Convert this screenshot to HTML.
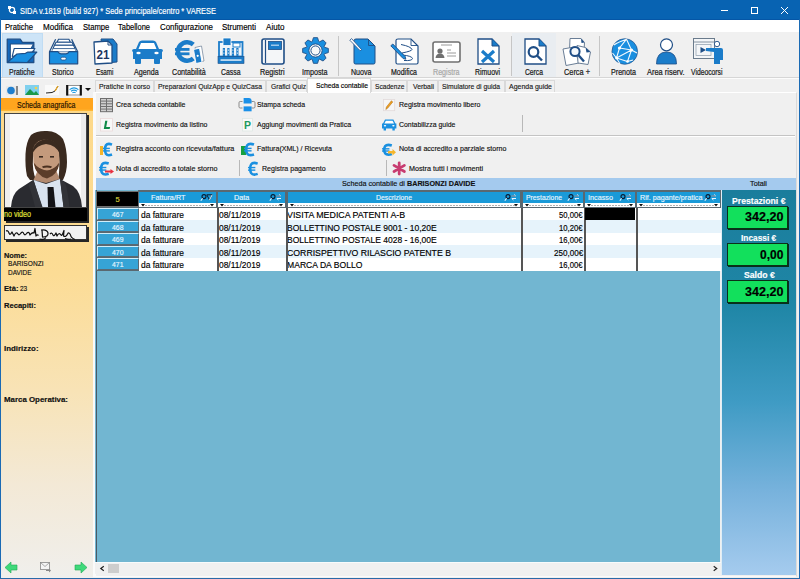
<!DOCTYPE html>
<html><head><meta charset="utf-8">
<style>
html,body{margin:0;padding:0;}
body{width:800px;height:579px;overflow:hidden;position:relative;background:#f0f0f0;font-family:"Liberation Sans",sans-serif;}
.t{position:absolute;white-space:nowrap;-webkit-text-stroke:0.16px currentColor;}
.b{position:absolute;box-sizing:border-box;}
svg.b{overflow:visible;}
</style></head><body>

<div class="b" style="left:0px;top:0px;width:800px;height:20px;background:#0863b2;"></div>
<div class="b" style="left:0px;top:19px;width:800px;height:1px;background:#0556a6;"></div>
<svg class="b" style="left:8px;top:6px" width="8" height="8" viewBox="0 0 8 8"><rect x="0" y="0" width="3" height="3" fill="#fff"/><rect x="5" y="5" width="3" height="3" fill="#fff"/><circle cx="4" cy="4" r="2.6" fill="none" stroke="#fff" stroke-width="1.3"/></svg>
<div class="t" style="left:20.00px;top:5.75px;font-size:8.4px;line-height:10.08px;color:#fff;transform:scaleX(0.8895);transform-origin:0 0;">SIDA v.1819 (build 927) * Sede principale/centro * VARESE</div>
<div class="b" style="left:721px;top:10px;width:7px;height:1px;background:#fff;"></div>
<div class="b" style="left:751px;top:7px;width:7px;height:7px;border:1px solid #fff;"></div>
<svg class="b" style="left:781px;top:7px" width="7" height="7" viewBox="0 0 7 7"><path d="M0 0L7 7M7 0L0 7" stroke="#fff" stroke-width="1"/></svg>
<div class="b" style="left:0px;top:19px;width:1px;height:560px;background:#1a6ab4;"></div>
<div class="b" style="left:799px;top:19px;width:1px;height:560px;background:#1a6ab4;"></div>
<div class="b" style="left:0px;top:577.6px;width:800px;height:1.4px;background:#2a6aa8;"></div>
<div class="b" style="left:1px;top:20px;width:798px;height:12px;background:#fff;"></div>
<div class="t" style="left:5.30px;top:22.64px;font-size:8.3px;line-height:9.96px;color:#000;transform:scaleX(0.9232);transform-origin:0 0;">Pratiche</div>
<div class="t" style="left:42.80px;top:22.64px;font-size:8.3px;line-height:9.96px;color:#000;transform:scaleX(0.9707);transform-origin:0 0;">Modifica</div>
<div class="t" style="left:82.50px;top:22.64px;font-size:8.3px;line-height:9.96px;color:#000;transform:scaleX(0.9198);transform-origin:0 0;">Stampe</div>
<div class="t" style="left:118.20px;top:22.64px;font-size:8.3px;line-height:9.96px;color:#000;transform:scaleX(0.9006);transform-origin:0 0;">Tabellone</div>
<div class="t" style="left:160.00px;top:22.64px;font-size:8.3px;line-height:9.96px;color:#000;transform:scaleX(0.9496);transform-origin:0 0;">Configurazione</div>
<div class="t" style="left:222.00px;top:22.64px;font-size:8.3px;line-height:9.96px;color:#000;transform:scaleX(0.9573);transform-origin:0 0;">Strumenti</div>
<div class="t" style="left:265.60px;top:22.64px;font-size:8.3px;line-height:9.96px;color:#000;transform:scaleX(0.9724);transform-origin:0 0;">Aiuto</div>
<div class="b" style="left:2px;top:33px;width:40.5px;height:44.5px;background:#cde4f7;border:1px solid #c0dcf3;"></div>
<div class="b" style="left:512px;top:33px;width:44px;height:44px;background:#e9edf1;"></div>
<div class="b" style="left:337.5px;top:36px;width:1px;height:40px;background:#c6c6c6;"></div>
<div class="b" style="left:510.7px;top:36px;width:1px;height:40px;background:#c6c6c6;"></div>
<div class="b" style="left:599px;top:36px;width:1px;height:40px;background:#c6c6c6;"></div>
<div class="b" style="left:1px;top:77px;width:798px;height:1px;background:#d6d6d6;"></div>
<div class="b" style="left:1px;top:78px;width:798px;height:1px;background:#fcfcfc;"></div>
<div class="t" style="left:8.70px;top:66.56px;font-size:8.6px;line-height:10.32px;color:#1a1a1a;transform:scaleX(0.8087);transform-origin:0 0;-webkit-text-stroke:0.22px currentColor;">Pratiche</div>
<div class="t" style="left:52.20px;top:66.56px;font-size:8.6px;line-height:10.32px;color:#1a1a1a;transform:scaleX(0.8075);transform-origin:0 0;-webkit-text-stroke:0.22px currentColor;">Storico</div>
<div class="t" style="left:96.00px;top:66.56px;font-size:8.6px;line-height:10.32px;color:#1a1a1a;transform:scaleX(0.7325);transform-origin:0 0;-webkit-text-stroke:0.22px currentColor;">Esami</div>
<div class="t" style="left:134.30px;top:66.56px;font-size:8.6px;line-height:10.32px;color:#1a1a1a;transform:scaleX(0.8333);transform-origin:0 0;-webkit-text-stroke:0.22px currentColor;">Agenda</div>
<div class="t" style="left:171.70px;top:66.56px;font-size:8.6px;line-height:10.32px;color:#1a1a1a;transform:scaleX(0.8299);transform-origin:0 0;-webkit-text-stroke:0.22px currentColor;">Contabilità</div>
<div class="t" style="left:220.80px;top:66.56px;font-size:8.6px;line-height:10.32px;color:#1a1a1a;transform:scaleX(0.8005);transform-origin:0 0;-webkit-text-stroke:0.22px currentColor;">Cassa</div>
<div class="t" style="left:260.00px;top:66.56px;font-size:8.6px;line-height:10.32px;color:#1a1a1a;transform:scaleX(0.8408);transform-origin:0 0;-webkit-text-stroke:0.22px currentColor;">Registri</div>
<div class="t" style="left:301.70px;top:66.56px;font-size:8.6px;line-height:10.32px;color:#1a1a1a;transform:scaleX(0.8339);transform-origin:0 0;-webkit-text-stroke:0.22px currentColor;">Imposta</div>
<div class="t" style="left:351.00px;top:66.56px;font-size:8.6px;line-height:10.32px;color:#1a1a1a;transform:scaleX(0.8252);transform-origin:0 0;-webkit-text-stroke:0.22px currentColor;">Nuova</div>
<div class="t" style="left:390.60px;top:66.56px;font-size:8.6px;line-height:10.32px;color:#1a1a1a;transform:scaleX(0.8125);transform-origin:0 0;-webkit-text-stroke:0.22px currentColor;">Modifica</div>
<div class="t" style="left:432.80px;top:66.56px;font-size:8.6px;line-height:10.32px;color:#a8a8a8;transform:scaleX(0.8281);transform-origin:0 0;-webkit-text-stroke:0.22px currentColor;">Registra</div>
<div class="t" style="left:475.00px;top:66.56px;font-size:8.6px;line-height:10.32px;color:#1a1a1a;transform:scaleX(0.8052);transform-origin:0 0;-webkit-text-stroke:0.22px currentColor;">Rimuovi</div>
<div class="t" style="left:525.30px;top:66.56px;font-size:8.6px;line-height:10.32px;color:#1a1a1a;transform:scaleX(0.7847);transform-origin:0 0;-webkit-text-stroke:0.22px currentColor;">Cerca</div>
<div class="t" style="left:563.50px;top:66.56px;font-size:8.6px;line-height:10.32px;color:#1a1a1a;transform:scaleX(0.8568);transform-origin:0 0;-webkit-text-stroke:0.22px currentColor;">Cerca +</div>
<div class="t" style="left:611.00px;top:66.56px;font-size:8.6px;line-height:10.32px;color:#1a1a1a;transform:scaleX(0.8303);transform-origin:0 0;-webkit-text-stroke:0.22px currentColor;">Prenota</div>
<div class="t" style="left:647.00px;top:66.56px;font-size:8.6px;line-height:10.32px;color:#1a1a1a;transform:scaleX(0.8661);transform-origin:0 0;-webkit-text-stroke:0.22px currentColor;">Area riserv.</div>
<div class="t" style="left:691.40px;top:66.56px;font-size:8.6px;line-height:10.32px;color:#1a1a1a;transform:scaleX(0.7856);transform-origin:0 0;-webkit-text-stroke:0.22px currentColor;">Videocorsi</div>
<svg class="b" style="left:5px;top:37px" width="34" height="28" viewBox="0 0 34 28">
<path d="M2.25 2.2 L15.2 2.2 L17.4 5.3 L28.8 5.3 L28.8 25.5 L2.25 25.5 Z" fill="#1268bd" stroke="#1f4e86" stroke-width="1.3" stroke-linejoin="round"/>
<path d="M5.3 7 L28.6 7 L25.6 12.2 L5.3 23.5 Z" fill="#fff" stroke="#1f4e86" stroke-width="1.1" stroke-linejoin="round"/>
<path d="M9.2 11.5 L30 11.5 L27.2 15 L7.2 19.5 Z" fill="#fff" stroke="#1f4e86" stroke-width="1.1" stroke-linejoin="round"/>
<path d="M2.6 25.2 L11.9 17 L20.5 16.3 L22.5 15.2 L31.8 15.2 L22.4 25.5 Z" fill="#1a8fe0" stroke="#1f4e86" stroke-width="1.2" stroke-linejoin="round"/>
</svg>
<svg class="b" style="left:48px;top:37px" width="31" height="28" viewBox="0 0 31 28">
<path d="M7.6 2.2 L1.5 14.7 M23.6 2.2 L29.7 14.7" stroke="#1f4e86" stroke-width="1.2"/>
<path d="M10.5 2.2 L20.9 2.2 L22.4 5.3 L9 5.3 Z" fill="#fff" stroke="#1f4e86" stroke-width="1.1"/>
<path d="M8 5.3 L24 5.3 L25.5 8.3 L6.5 8.3 Z" fill="#fff" stroke="#1f4e86" stroke-width="1.1"/>
<path d="M6.5 8.3 L25.5 8.3 L27 11.6 L5 11.6 Z" fill="#fff" stroke="#1f4e86" stroke-width="1.1"/>
<path d="M5 11.6 L27 11.6 L28 14.7 L3.5 14.7 Z" fill="#fff" stroke="#1f4e86" stroke-width="0.6"/>
<path d="M1.5 14.7 L10 14.7 Q11 16.8 13 16.8 L18 16.8 Q20 16.8 21 14.7 L29.7 14.7 L29.7 26.8 L1.5 26.8 Z" fill="#1a8fe0" stroke="#1f4e86" stroke-width="1.2" stroke-linejoin="round"/>
<rect x="12.9" y="20.2" width="5.2" height="2.8" rx="1.2" fill="#fff" stroke="#1f4e86" stroke-width="0.8"/>
</svg>
<svg class="b" style="left:92px;top:38px" width="26" height="27" viewBox="0 0 26 27">
<path d="M9 1 L21 1 L25 6 L25 24 L13 25 Z" fill="#1b7cc9" stroke="#1f4e86" stroke-width="1"/>
<path d="M2 4 L16 3 L20 7 L20 25 L3 26 Z" fill="#fff" stroke="#1f4e86" stroke-width="1.3" stroke-linejoin="round"/>
<path d="M16 3 L16 7 L20 7" fill="none" stroke="#1f4e86" stroke-width="1"/>
<text x="11" y="21" font-family="Liberation Sans" font-weight="bold" font-size="13" fill="#1d3560" text-anchor="middle" textLength="13" lengthAdjust="spacingAndGlyphs">21</text>
</svg>
<svg class="b" style="left:132px;top:40px" width="31" height="25" viewBox="0 0 31 25">
<path d="M7 2 Q8 0.5 10 0.5 L21 0.5 Q23 0.5 24 2 L27 9 L29 9 Q31 9 31 11 L30 12 L30 19 L1 19 L1 12 L0 11 Q0 9 2 9 L4 9 Z" fill="#1b7cc9"/>
<path d="M9 3 L22 3 L24.5 9 L6.5 9 Z" fill="#fff"/>
<rect x="3" y="18" width="6" height="6" rx="1" fill="#1b7cc9"/>
<rect x="22" y="18" width="6" height="6" rx="1" fill="#1b7cc9"/>
<ellipse cx="6.5" cy="13" rx="2.2" ry="1.3" fill="#fff"/>
<ellipse cx="24.5" cy="13" rx="2.2" ry="1.3" fill="#fff"/>
</svg>
<svg class="b" style="left:174px;top:39px" width="30" height="26" viewBox="0 0 30 26">
<path d="M19.3 5.4 A9.3 9.3 0 1 0 19.3 19.6" fill="none" stroke="#1b7cc9" stroke-width="4.6"/>
<rect x="1" y="9" width="14.5" height="2.8" fill="#1b7cc9"/>
<rect x="1" y="13.4" width="14.5" height="2.8" fill="#1b7cc9"/>
<path d="M21 8.5 L27.5 7 L30 22 L23.5 23.5 Z" fill="#fff" stroke="#7a8aa0" stroke-width="0.8"/>
<path d="M19.5 10.5 L25.5 9.2 L28 23.2 L22 24.5 Z" fill="#1b7cc9" stroke="#fff" stroke-width="0.9"/>
<circle cx="23.7" cy="16.8" r="1.1" fill="#fff"/>
</svg>
<svg class="b" style="left:217px;top:37px" width="28" height="28" viewBox="0 0 28 28">
<rect x="2" y="5" width="23.5" height="14.5" fill="#eef4fa" stroke="#1b7cc9" stroke-width="1.8"/>
<rect x="6" y="1" width="8" height="7.5" fill="#1b7cc9" stroke="#fff" stroke-width="0.8"/>
<rect x="16" y="6" width="7" height="4" fill="#fff" stroke="#1b7cc9" stroke-width="1"/>
<rect x="5.8" y="11" width="2.2" height="8.5" fill="#1b7cc9"/><rect x="10.3" y="11" width="2.2" height="8.5" fill="#1b7cc9"/><rect x="14.8" y="11" width="2.2" height="8.5" fill="#1b7cc9"/><rect x="19.3" y="11" width="2.2" height="8.5" fill="#1b7cc9"/>
<path d="M6.9 13 v0.1 M11.4 13 v0.1 M15.9 13 v0.1 M20.4 13 v0.1 M6.9 16 v0.1 M11.4 16 v0.1 M15.9 16 v0.1 M20.4 16 v0.1" stroke="#fff" stroke-width="1.2" stroke-linecap="round"/>
<rect x="1" y="19.5" width="26" height="7" fill="#1b7cc9" stroke="#1f4e86" stroke-width="0.6"/>
<rect x="3.5" y="22.4" width="21" height="1.3" fill="#fff"/>
</svg>
<svg class="b" style="left:261px;top:38px" width="24" height="27" viewBox="0 0 24 27">
<rect x="1" y="1" width="22" height="25" rx="2" fill="#f4f6f8" stroke="#1f4e86" stroke-width="1.6"/>
<line x1="4.5" y1="2" x2="4.5" y2="25" stroke="#1f4e86" stroke-width="1.2"/>
<rect x="7.5" y="3.5" width="13" height="8" fill="#1b7cc9" stroke="#1f4e86" stroke-width="0.8"/>
<rect x="10" y="6.5" width="8" height="1.5" fill="#9fc8ea"/>
</svg>
<svg class="b" style="left:301.5px;top:37px" width="27" height="27" viewBox="0 0 27 27">
<path d="M26.33 11.43 L26.33 15.57 L22.55 16.70 L22.16 17.64 L24.04 21.11 L21.11 24.04 L17.64 22.16 L16.70 22.55 L15.57 26.33 L11.43 26.33 L10.30 22.55 L9.36 22.16 L5.89 24.04 L2.96 21.11 L4.84 17.64 L4.45 16.70 L0.67 15.57 L0.67 11.43 L4.45 10.30 L4.84 9.36 L2.96 5.89 L5.89 2.96 L9.36 4.84 L10.30 4.45 L11.43 0.67 L15.57 0.67 L16.70 4.45 L17.64 4.84 L21.11 2.96 L24.04 5.89 L22.16 9.36 L22.55 10.30 Z" fill="#1a8fe0" stroke="#1f4e86" stroke-width="0.9" stroke-linejoin="round"/>
<circle cx="13.5" cy="13.5" r="6.6" fill="#fff" stroke="#1f4e86" stroke-width="0.9"/>
<circle cx="13.5" cy="13.5" r="4.6" fill="#f8f8f8" stroke="#1f4e86" stroke-width="1"/>
</svg>
<svg class="b" style="left:349px;top:38px" width="27" height="27" viewBox="0 0 27 27">
<path d="M7 1 L19 1 L26 8 L26 24.5 Q26 26 24.5 26 L6.5 26 Q5 26 5 24.5 L5 2.5 Q5 1 7 1 Z" fill="#1a8fe0" stroke="#1f4e86" stroke-width="1"/>
<path d="M19.5 1.5 L19.5 7.5 L25.5 7.5" fill="none" stroke="#1f4e86" stroke-width="0.9"/>
<path d="M0.8 2.2 L2.6 0.6 L12.5 11.5 L11.8 12.6 L10.6 12.2 Z" fill="#fff" stroke="#1f4e86" stroke-width="0.8"/>
</svg>
<svg class="b" style="left:390px;top:38px" width="29" height="27" viewBox="0 0 29 27">
<path d="M8 1 L21 1 L28 8 L28 24.5 Q28 26 26.5 26 L7.5 26 Q6 26 6 24.5 L6 2.5 Q6 1 8 1 Z" fill="#fff" stroke="#1f4e86" stroke-width="1.2"/>
<path d="M21 1.5 L21 7.5 L27.5 7.5" fill="none" stroke="#1f4e86" stroke-width="0.9"/>
<path d="M11 6.5 Q21 8.5 22 11.5 Q22 13 12 15 Q11 16 12.5 17 Q22 18 22.5 20.5 Q22 23 14 22.5" fill="none" stroke="#1f4e86" stroke-width="1"/>
<path d="M0.8 7.8 L2.8 6 L15.2 18.6 L15.8 21.2 L13.2 20.6 Z" fill="#1a8fe0" stroke="#1f4e86" stroke-width="0.9"/>
</svg>
<svg class="b" style="left:432px;top:41px" width="29" height="22" viewBox="0 0 29 22">
<rect x="1" y="1" width="27" height="20" rx="2" fill="#fff" stroke="#707070" stroke-width="1.6"/>
<line x1="9" y1="4" x2="20" y2="4" stroke="#9a9a9a" stroke-width="1"/>
<circle cx="8" cy="10" r="2.6" fill="#707070"/>
<path d="M3.5 17 Q4 12.5 8 12.5 Q12 12.5 12.5 17 Z" fill="#707070"/>
<line x1="15" y1="9" x2="19" y2="9" stroke="#9a9a9a" stroke-width="1"/>
<line x1="15" y1="12" x2="24" y2="12" stroke="#9a9a9a" stroke-width="1"/>
<line x1="15" y1="15" x2="24" y2="15" stroke="#9a9a9a" stroke-width="1"/>
</svg>
<svg class="b" style="left:477px;top:38px" width="23" height="27" viewBox="0 0 23 27">
<path d="M1 1 L15 1 L22 8 L22 26 L1 26 Z" fill="#fff" stroke="#1f4e86" stroke-width="1.3"/>
<path d="M15 1 L15 8 L22 8" fill="#1b7cc9" stroke="#1f4e86" stroke-width="1"/>
<path d="M5 13 L17 24 M17 13 L5 24" stroke="#1b7cc9" stroke-width="3.2"/>
</svg>
<svg class="b" style="left:524px;top:38px" width="23" height="27" viewBox="0 0 23 27">
<path d="M1 1 L15 1 L22 8 L22 26 L1 26 Z" fill="#fff" stroke="#1f4e86" stroke-width="1.3"/>
<path d="M15 1 L15 8 L22 8" fill="#1b7cc9" stroke="#1f4e86" stroke-width="1"/>
<circle cx="9.5" cy="14" r="4.8" fill="#fff" stroke="#1f4e86" stroke-width="2.2"/>
<path d="M13 17.5 L18 22.5" stroke="#1f4e86" stroke-width="2.4"/>
</svg>
<svg class="b" style="left:561px;top:37px" width="32" height="29" viewBox="0 0 32 29">
<path d="M9 1.5 L20 1.5 L23.5 5.5 L23 14 L8.5 14 Z" fill="#fff" stroke="#6a7e96" stroke-width="1"/>
<path d="M2 12 L13 10 L18 26 L5 28.5 Z" fill="#fff" stroke="#6a7e96" stroke-width="1"/>
<path d="M16 8.5 L24.5 10.5 L29.5 15 L27 27.5 L17 26 Z" fill="#fff" stroke="#6a7e96" stroke-width="1"/>
<path d="M20 1.5 L23.5 5.5 L20.5 6 Z" fill="#1f4e86"/>
<path d="M24.5 10.5 L29.5 15 L25.5 15.5 Z" fill="#1f4e86"/>
<circle cx="14" cy="14.5" r="4.6" fill="#f4f8fc" stroke="#1f4e86" stroke-width="2"/>
<path d="M17.3 18 L23 24.5" stroke="#1f4e86" stroke-width="2.4"/>
</svg>
<svg class="b" style="left:610.5px;top:38px" width="27.5" height="27" viewBox="0 0 27.5 27">
<circle cx="13.75" cy="13.5" r="12.8" fill="#1a8fe0" stroke="#1f4e86" stroke-width="0.7"/>
<path d="M15.5 1.2 L8.5 10 L5.5 20 L16.5 23.5 L20.5 12 L15.5 1.2 M8.5 10 L20.5 12 M5.5 20 L20.5 12 M3 7 Q7 4 15.5 1.2 M1.5 15 L5.5 20 M20.5 12 L26 15 M16.5 23.5 L22 22 M9 26 L5.5 20" fill="none" stroke="#fff" stroke-width="1.1" opacity="0.95"/>
<circle cx="8.5" cy="10" r="1.6" fill="#fff"/><circle cx="20.5" cy="12" r="1.6" fill="#fff"/><circle cx="5.5" cy="20" r="1.4" fill="#fff"/><circle cx="16.5" cy="23.5" r="1.3" fill="#fff"/>
</svg>
<svg class="b" style="left:655.5px;top:38px" width="21" height="27" viewBox="0 0 21 27">
<circle cx="10.5" cy="6.8" r="6" fill="#fff" stroke="#1f4e86" stroke-width="1.2"/>
<path d="M0.5 26 Q0.5 14 10.5 14 Q20.5 14 20.5 26 Z" fill="#1b7cc9" stroke="#1f4e86" stroke-width="0.8"/>
</svg>
<svg class="b" style="left:693px;top:38px" width="31" height="27" viewBox="0 0 31 27">
<rect x="0.5" y="0.5" width="21" height="20" fill="#f4f6f8" stroke="#6a7b8c" stroke-width="1"/>
<line x1="1" y1="4" x2="21" y2="4" stroke="#6a7b8c" stroke-width="0.8"/>
<rect x="3" y="6.5" width="15" height="11" fill="none" stroke="#8a9aaa" stroke-width="0.7"/>
<path d="M7.5 9 L13 12 L7.5 15 Z" fill="#1f4e86"/>
<circle cx="24" cy="6" r="2.7" fill="#fff" stroke="#1f4e86" stroke-width="0.9"/>
<path d="M13 10 L28 10 Q30 10 30 12 L30 22 L27 22 L27 26 L21 26 L21 14 L13 13 Z" fill="#1b7cc9"/>
</svg>
<svg class="b" style="left:5px;top:85px" width="14" height="10" viewBox="0 0 14 10"><rect x="1" y="1" width="12" height="9" rx="1" fill="#e8e8e8" /><circle cx="6" cy="5.5" r="3.8" fill="#1f7fcf"/><rect x="11" y="1" width="2" height="9" fill="#888"/></svg>
<svg class="b" style="left:25px;top:85px" width="14" height="10" viewBox="0 0 14 10"><rect x="0" y="0" width="14" height="10" fill="#7fd0ee"/><path d="M0 10 L5 4 L9 8 L11 6 L14 10 Z" fill="#1c9a4c"/><circle cx="11" cy="3" r="1.3" fill="#f3d04a"/></svg>
<svg class="b" style="left:45px;top:85px" width="14" height="10" viewBox="0 0 14 10"><rect x="0" y="0" width="14" height="10" fill="#fafafa"/><path d="M1 8 L7 7.5 L10 6 L13 1" fill="none" stroke="#222" stroke-width="1"/><path d="M10 6 L13 1" stroke="#e7a82a" stroke-width="1.4"/></svg>
<svg class="b" style="left:65.5px;top:85px" width="16" height="10.5" viewBox="0 0 16 10.5"><rect x="0" y="0" width="16" height="10.5" rx="1" fill="#fff"/><path d="M0.5 0.5 H15.5 M0.5 10 H15.5" stroke="#777" stroke-width="0.8"/><path d="M1.2 0 V10.5 M14.8 0 V10.5" stroke="#111" stroke-width="2.2"/><path d="M3.6 4.6 Q8 1.2 12.4 4.6 M5 6.2 Q8 4 11 6.2 M6.4 7.8 Q8 6.8 9.6 7.8" fill="none" stroke="#1c9ae0" stroke-width="1.1"/></svg>
<svg class="b" style="left:85px;top:88px" width="6" height="3" viewBox="0 0 6 3"><path d="M0 0 L6 0 L3 3 Z" fill="#111"/></svg>
<div class="b" style="left:1px;top:97.75px;width:92px;height:13.25px;background:linear-gradient(to bottom,#ffa51e 0%,#ffa51e 85%,#ffbe3c 100%);"></div>
<div class="t" style="left:17.25px;top:100.05px;font-size:8.4px;line-height:10.08px;color:#1e1200;transform:scaleX(0.8362);transform-origin:0 0;">Scheda anagrafica</div>
<div class="b" style="left:1px;top:111px;width:92px;height:466px;background:linear-gradient(to bottom,#fdd98a 0%,#fcdc95 35%,#f8e3b6 60%,#f3e9d6 80%,#f0efec 100%);"></div>
<div class="b" style="left:5.5px;top:114.5px;width:83px;height:108px;background:#262626;"></div>
<div class="b" style="left:4px;top:113px;width:83px;height:95px;background:#fff;border:1px solid #444;"></div>
<svg class="b" style="left:5px;top:114px" width="81" height="93" viewBox="0 0 81 93">
<rect x="0" y="0" width="81" height="93" fill="#fbfbfb"/>
<rect x="0" y="0" width="5" height="93" fill="#eeeeee"/>
<rect x="76" y="0" width="5" height="93" fill="#ececec"/>
<path d="M40 17 Q31 17 26 21 Q21 28 20.5 40 Q20 53 22 62 L25 66 L31 66 Q27 56 28 44 Q29 30 41 27 Q53 29 54 42 Q55 56 53 66 L58 66 Q62 58 62 48 Q62 34 58 25 Q51 16 40 17 Z" fill="#3a2a1f"/>
<path d="M28 37 Q29 26 41 25.5 Q53 26.5 54 38 L54.5 48 Q53.5 60 42 64 Q30 61 28.5 49 Z" fill="#c49a7c"/>
<path d="M27.5 39 Q28 27 41 25 Q55 26.5 55 40 Q51 31 41 30 Q32 31 27.5 39 Z" fill="#3a2a1f"/>
<path d="M29 49 Q31 62 42 64.5 Q53 61 54 49 Q50 55.5 42 56.5 Q33 55.5 29 49 Z" fill="#5b3d2a"/>
<path d="M37 52.5 Q42 50.5 47 52.5 L46 54 Q42 53 38 54 Z" fill="#4a3020"/>
<rect x="34" y="42" width="4" height="1.6" fill="#3a2a20"/><rect x="45" y="42" width="4" height="1.6" fill="#3a2a20"/>
<path d="M33 56 L51 56 L55 66 L41 70 L28.5 66 Z" fill="#b28a70"/>
<path d="M29 49 Q31 62 42 64.5 Q53 61 54 49 Q50 55.5 42 56.5 Q33 55.5 29 49 Z" fill="#5b3d2a"/>
<path d="M6 93 Q7 80 14 75 L28 66 L41 69 L55 65 L68 72 Q76 78 77 93 Z" fill="#2a2b30"/>
<path d="M28.5 66 L41 70 L55 65 L58.5 93 L37 93 Z" fill="#d9e3f0"/>
<path d="M28.5 66 L37.5 93 L30 93 Q27 80 23.5 71 Z" fill="#323338"/>
<path d="M55 65 L58.5 93 L64.5 93 Q63 79 60.5 69 Z" fill="#323338"/>
<path d="M42.5 73 L48.5 73 L50.5 93 L43 93 Z" fill="#141418"/>
</svg>
<div class="b" style="left:4px;top:208px;width:83px;height:13px;background:#000;"></div>
<div class="t" style="left:4.00px;top:210.24px;font-size:8.2px;line-height:9.84px;color:#e2e23c;transform:scaleX(0.8718);transform-origin:0 0;">no video</div>
<div class="b" style="left:5.5px;top:226.5px;width:83px;height:15.5px;background:#262626;"></div>
<div class="b" style="left:4px;top:225px;width:83px;height:15px;background:#f2f2f2;border:1px solid #333;"></div>
<svg class="b" style="left:4px;top:225px" width="84" height="16" viewBox="0 0 84 16"><path d="M2 6 Q4 5 5 8 Q6 11 8 7 L10 11 Q12 6 14 9 Q15 11 17 8 Q19 6 20 9 Q21 11 23 8 Q25 6 26 10 Q28 7 30 8 L31 3.5 L32 11 Q33 9 34.5 10.5 M37 5 Q43 4 44 8 Q44.5 12 38.5 12 L38 5 M35.5 14 Q40 15.5 42 12.5 M46 9 Q48 7 49 10 Q50 12 52 8 L53 11 Q55 7 57 10 Q58 11.5 60 5.5 L59.5 11 Q62 12.5 63.5 9 Q65 6.5 66.5 10 Q67 13 71 14.5 M61 13.5 Q64 15 67 14" fill="none" stroke="#111" stroke-width="1.25" stroke-linejoin="round"/></svg>
<div class="t" style="left:4.00px;top:250.52px;font-size:7.8px;line-height:9.36px;color:#111;font-weight:bold;transform:scaleX(0.9478);transform-origin:0 0;">Nome:</div>
<div class="t" style="left:8.00px;top:258.92px;font-size:7.8px;line-height:9.36px;color:#111;transform:scaleX(0.8446);transform-origin:0 0;">BARISONZI</div>
<div class="t" style="left:8.00px;top:267.92px;font-size:7.8px;line-height:9.36px;color:#111;transform:scaleX(0.8259);transform-origin:0 0;">DAVIDE</div>
<div class="t" style="left:4.00px;top:283.92px;font-size:7.8px;line-height:9.36px;color:#111;font-weight:bold;transform:scaleX(0.9841);transform-origin:0 0;">Età:</div>
<div class="t" style="left:20.00px;top:283.92px;font-size:7.8px;line-height:9.36px;color:#111;transform:scaleX(0.8288);transform-origin:0 0;">23</div>
<div class="t" style="left:4.00px;top:301.12px;font-size:7.8px;line-height:9.36px;color:#111;font-weight:bold;transform:scaleX(0.9715);transform-origin:0 0;">Recapiti:</div>
<div class="t" style="left:4.00px;top:344.12px;font-size:7.8px;line-height:9.36px;color:#111;font-weight:bold;transform:scaleX(1.0082);transform-origin:0 0;">Indirizzo:</div>
<div class="t" style="left:4.00px;top:394.62px;font-size:7.8px;line-height:9.36px;color:#111;font-weight:bold;transform:scaleX(1.0114);transform-origin:0 0;">Marca Operativa:</div>
<svg class="b" style="left:5px;top:562px" width="12" height="11" viewBox="0 0 12 11"><path d="M0 5.5 L6 0 L6 3 L12 3 L12 8 L6 8 L6 11 Z" fill="#3fd97a" stroke="#1ea855" stroke-width="0.6"/></svg>
<svg class="b" style="left:40px;top:562px" width="11" height="10" viewBox="0 0 11 10"><rect x="0.5" y="0.5" width="9" height="7" fill="#f4f4f4" stroke="#888" stroke-width="0.8"/><path d="M0.5 0.5 L5 4.5 L9.5 0.5" fill="none" stroke="#888" stroke-width="0.7"/><path d="M6 8 L9 8 L9 6.5 L11 8.5 L9 10.5 L9 9 L6 9" fill="#888"/></svg>
<svg class="b" style="left:75px;top:562px" width="12" height="11" viewBox="0 0 12 11"><path d="M12 5.5 L6 0 L6 3 L0 3 L0 8 L6 8 L6 11 Z" fill="#3fd97a" stroke="#1ea855" stroke-width="0.6"/></svg>
<div class="b" style="left:94.5px;top:80px;width:59.099999999999994px;height:12.5px;background:#f0f0f0;border:1px solid #d9d9d9;border-bottom:none;"></div>
<div class="t" style="left:99.00px;top:81.93px;font-size:8px;line-height:9.6px;color:#1a1a1a;transform:scaleX(0.8558);transform-origin:0 0;">Pratiche in corso</div>
<div class="b" style="left:153.6px;top:80px;width:112.1px;height:12.5px;background:#f0f0f0;border:1px solid #d9d9d9;border-bottom:none;"></div>
<div class="t" style="left:157.50px;top:81.93px;font-size:8px;line-height:9.6px;color:#1a1a1a;transform:scaleX(0.8536);transform-origin:0 0;">Preparazioni QuizApp e QuizCasa</div>
<div class="b" style="left:265.7px;top:80px;width:41.30000000000001px;height:12.5px;background:#f0f0f0;border:1px solid #d9d9d9;border-bottom:none;"></div>
<div class="t" style="left:271.00px;top:81.93px;font-size:8px;line-height:9.6px;color:#1a1a1a;transform:scaleX(0.8374);transform-origin:0 0;">Grafici Quiz</div>
<div class="b" style="left:371px;top:80px;width:36px;height:12.5px;background:#f0f0f0;border:1px solid #d9d9d9;border-bottom:none;"></div>
<div class="t" style="left:375.00px;top:81.93px;font-size:8px;line-height:9.6px;color:#1a1a1a;transform:scaleX(0.8288);transform-origin:0 0;">Scadenze</div>
<div class="b" style="left:407px;top:80px;width:31px;height:12.5px;background:#f0f0f0;border:1px solid #d9d9d9;border-bottom:none;"></div>
<div class="t" style="left:413.00px;top:81.93px;font-size:8px;line-height:9.6px;color:#1a1a1a;transform:scaleX(0.8582);transform-origin:0 0;">Verbali</div>
<div class="b" style="left:438px;top:80px;width:66.5px;height:12.5px;background:#f0f0f0;border:1px solid #d9d9d9;border-bottom:none;"></div>
<div class="t" style="left:442.00px;top:81.93px;font-size:8px;line-height:9.6px;color:#1a1a1a;transform:scaleX(0.8469);transform-origin:0 0;">Simulatore di guida</div>
<div class="b" style="left:504.5px;top:80px;width:50.5px;height:12.5px;background:#f0f0f0;border:1px solid #d9d9d9;border-bottom:none;"></div>
<div class="t" style="left:508.80px;top:81.93px;font-size:8px;line-height:9.6px;color:#1a1a1a;transform:scaleX(0.8706);transform-origin:0 0;">Agenda guide</div>
<div class="b" style="left:93px;top:92px;width:704px;height:485px;background:#f0f0f0;border:1px solid #dadada;border-top-color:#fff;border-bottom-color:#fafafa;border-left:3px solid #fafafa;"></div>
<div class="b" style="left:307px;top:78px;width:64px;height:15px;background:#fff;border:1px solid #d9d9d9;border-bottom:none;"></div>
<div class="t" style="left:315.60px;top:80.93px;font-size:8px;line-height:9.6px;color:#000;transform:scaleX(0.8470);transform-origin:0 0;">Scheda contabile</div>
<div class="t" style="left:115.60px;top:99.93px;font-size:8px;line-height:9.6px;color:#111;transform:scaleX(0.8718);transform-origin:0 0;">Crea scheda contabile</div>
<div class="t" style="left:257.00px;top:99.93px;font-size:8px;line-height:9.6px;color:#111;transform:scaleX(0.8634);transform-origin:0 0;">Stampa scheda</div>
<div class="t" style="left:398.60px;top:99.93px;font-size:8px;line-height:9.6px;color:#111;transform:scaleX(0.8759);transform-origin:0 0;">Registra movimento libero</div>
<div class="t" style="left:115.60px;top:119.93px;font-size:8px;line-height:9.6px;color:#111;transform:scaleX(0.8710);transform-origin:0 0;">Registra movimento da listino</div>
<div class="t" style="left:257.00px;top:119.93px;font-size:8px;line-height:9.6px;color:#111;transform:scaleX(0.8699);transform-origin:0 0;">Aggiungi movimenti da Pratica</div>
<div class="t" style="left:398.60px;top:119.93px;font-size:8px;line-height:9.6px;color:#111;transform:scaleX(0.8627);transform-origin:0 0;">Contabilizza guide</div>
<div class="t" style="left:115.60px;top:144.43px;font-size:8px;line-height:9.6px;color:#111;transform:scaleX(0.9087);transform-origin:0 0;">Registra acconto con ricevuta/fattura</div>
<div class="t" style="left:257.00px;top:144.43px;font-size:8px;line-height:9.6px;color:#111;transform:scaleX(0.8832);transform-origin:0 0;">Fattura(XML) / Ricevuta</div>
<div class="t" style="left:398.60px;top:144.43px;font-size:8px;line-height:9.6px;color:#111;transform:scaleX(0.8846);transform-origin:0 0;">Nota di accredito a parziale storno</div>
<div class="t" style="left:115.60px;top:163.93px;font-size:8px;line-height:9.6px;color:#111;transform:scaleX(0.8977);transform-origin:0 0;">Nota di accredito a totale storno</div>
<div class="t" style="left:262.40px;top:163.93px;font-size:8px;line-height:9.6px;color:#111;transform:scaleX(0.8828);transform-origin:0 0;">Registra pagamento</div>
<div class="t" style="left:409.00px;top:163.93px;font-size:8px;line-height:9.6px;color:#111;transform:scaleX(0.8997);transform-origin:0 0;">Mostra tutti i movimenti</div>
<div class="b" style="left:96px;top:135px;width:699px;height:1px;background:#c4c4c4;"></div>
<div class="b" style="left:96px;top:136px;width:699px;height:1px;background:#fff;"></div>
<div class="b" style="left:522px;top:115px;width:1px;height:17px;background:#b8b8b8;"></div>
<div class="b" style="left:238.5px;top:160px;width:1px;height:16px;background:#b8b8b8;"></div>
<div class="b" style="left:385.5px;top:160px;width:1px;height:16px;background:#b8b8b8;"></div>
<svg class="b" style="left:99.5px;top:97.8px" width="13" height="14.2" viewBox="0 0 13 14.2"><rect x="0.5" y="0.5" width="12" height="13.2" fill="#d0d0d0" stroke="#6e6e6e" stroke-width="1"/><path d="M0.5 3.1 H12.5 M0.5 5.8 H12.5 M0.5 8.5 H12.5 M0.5 11.1 H12.5 M6.5 0.5 V13.7" stroke="#6e6e6e" stroke-width="1"/></svg>
<svg class="b" style="left:238px;top:97px" width="18" height="15" viewBox="0 0 18 15"><path d="M4.5 4.5 L2.2 4.5 Q1 4.5 1 5.7 L1 9.8 Q1 11 2.2 11 L4.5 11 M13.5 4.5 L15.8 4.5 Q17 4.5 17 5.7 L17 9.8 Q17 11 15.8 11 L13.5 11" fill="none" stroke="#8a8a8a" stroke-width="1"/><path d="M5.6 1 L11.2 1 Q13.6 1 13.6 3.5 L13.6 6.6 L5.6 6.6 Z" fill="#1a90e8"/><rect x="5.6" y="9.4" width="8" height="4.9" fill="#1a90e8"/></svg>
<svg class="b" style="left:383px;top:98.6px" width="12.2" height="12.2" viewBox="0 0 12.2 12.2"><rect x="0.5" y="0.5" width="11.2" height="11.2" fill="#f6f6f6" stroke="#e2dada" stroke-width="0.8"/><path d="M2.8 10.5 L3.4 8 L8.4 1.8 L9.8 2.9 L4.8 9.1 Z" fill="#f0a020" stroke="#a86a10" stroke-width="0.5"/></svg>
<svg class="b" style="left:99.5px;top:118px" width="13" height="13.5" viewBox="0 0 13 13.5"><rect x="0.5" y="0.5" width="12" height="12.5" fill="#f8f8f8" stroke="#eadada" stroke-width="0.8"/><path d="M5.2 2.8 L7.4 2.8 L6.2 9 L10.2 9 L9.6 11 L3.8 11 Z" fill="#108a48"/></svg>
<svg class="b" style="left:242px;top:118px" width="11" height="13.5" viewBox="0 0 11 13.5"><rect x="0.5" y="0.5" width="10" height="12.5" fill="#f8f8f8" stroke="#dfe8e4" stroke-width="0.8"/><text x="5.5" y="10.8" font-family="Liberation Sans" font-weight="bold" font-size="10.5" fill="#1f9a60" text-anchor="middle">P</text></svg>
<svg class="b" style="left:381.6px;top:119.4px" width="14.4" height="11.6" viewBox="0 0 14.4 11.6"><path d="M3 0.5 L11.4 0.5 L13.4 4.6 L14.4 4.6 L14.4 9.4 L12.8 9.4 L12.8 11.6 L10.4 11.6 L10.4 9.4 L4 9.4 L4 11.6 L1.6 11.6 L1.6 9.4 L0 9.4 L0 4.6 L1 4.6 Z" fill="#1a90e0"/><path d="M3.8 1.8 L10.6 1.8 L12 4.6 L2.4 4.6 Z" fill="#fff"/><ellipse cx="3" cy="6.8" rx="1.2" ry="0.8" fill="#fff"/><ellipse cx="11.4" cy="6.8" rx="1.2" ry="0.8" fill="#fff"/></svg>
<div class="b" style="left:99.6px;top:146px;width:3.8px;height:8.8px;background:#f5b52a;"></div>
<svg class="b" style="left:102.9px;top:142.6px" width="9.5" height="13.1" viewBox="0 0 9.5 13.1"><path d="M9.0 1.6 Q7.125 0.9 5.89 0.9 Q1.9000000000000001 0.9 2.09 6.55 Q1.9000000000000001 12.2 5.89 12.2 Q7.125 12.2 9.0 11.5" fill="none" stroke="#1a90e0" stroke-width="2.6"/><rect x="0" y="4.715999999999999" width="6.84" height="1.4" fill="#1a90e0"/><rect x="0" y="7.205" width="6.84" height="1.4" fill="#1a90e0"/></svg>
<div class="b" style="left:241px;top:146.2px;width:5px;height:9.3px;background:#15a040;"></div>
<svg class="b" style="left:244px;top:143px" width="10.5" height="13" viewBox="0 0 10.5 13"><path d="M10.0 1.6 Q7.875 0.9 6.51 0.9 Q2.1 0.9 2.31 6.5 Q2.1 12.1 6.51 12.1 Q7.875 12.1 10.0 11.4" fill="none" stroke="#1a90e0" stroke-width="2.6"/><rect x="0" y="4.68" width="7.56" height="1.4" fill="#1a90e0"/><rect x="0" y="7.15" width="7.56" height="1.4" fill="#1a90e0"/></svg>
<svg class="b" style="left:382px;top:143.8px" width="10.3" height="11.5" viewBox="0 0 10.3 11.5"><path d="M9.8 1.6 Q7.7250000000000005 0.9 6.386 0.9 Q2.06 0.9 2.266 5.75 Q2.06 10.6 6.386 10.6 Q7.7250000000000005 10.6 9.8 9.9" fill="none" stroke="#1a90e0" stroke-width="2.6"/><rect x="0" y="4.14" width="7.416" height="1.4" fill="#1a90e0"/><rect x="0" y="6.325" width="7.416" height="1.4" fill="#1a90e0"/></svg>
<svg class="b" style="left:388px;top:149px" width="8" height="6.5" viewBox="0 0 8 6.5"><path d="M0 2 L4.5 2 L4.5 0 L8 3.2 L4.5 6.5 L4.5 4.5 L0 4.5 Z" fill="#f5b52a"/></svg>
<svg class="b" style="left:98.6px;top:162.3px" width="10.2" height="13.4" viewBox="0 0 10.2 13.4"><path d="M9.7 1.6 Q7.6499999999999995 0.9 6.324 0.9 Q2.04 0.9 2.2439999999999998 6.7 Q2.04 12.5 6.324 12.5 Q7.6499999999999995 12.5 9.7 11.8" fill="none" stroke="#1a90e0" stroke-width="2.6"/><rect x="0" y="4.824" width="7.343999999999999" height="1.4" fill="#1a90e0"/><rect x="0" y="7.370000000000001" width="7.343999999999999" height="1.4" fill="#1a90e0"/></svg>
<svg class="b" style="left:105px;top:168.5px" width="9" height="5" viewBox="0 0 9 5"><path d="M0 1.6 L5.5 1.6 L5.5 0 L9 2.5 L5.5 5 L5.5 3.4 L0 3.4 Z" fill="#e83040"/></svg>
<svg class="b" style="left:247.5px;top:162.4px" width="10.2" height="13.5" viewBox="0 0 10.2 13.5"><path d="M9.7 1.6 Q7.6499999999999995 0.9 6.324 0.9 Q2.04 0.9 2.2439999999999998 6.75 Q2.04 12.6 6.324 12.6 Q7.6499999999999995 12.6 9.7 11.9" fill="none" stroke="#1a90e0" stroke-width="2.6"/><rect x="0" y="4.859999999999999" width="7.343999999999999" height="1.4" fill="#1a90e0"/><rect x="0" y="7.425000000000001" width="7.343999999999999" height="1.4" fill="#1a90e0"/></svg>
<svg class="b" style="left:392.3px;top:162.4px" width="14.4" height="12.9" viewBox="0 0 14.4 12.9"><path d="M7.2 0.8 V12.1 M2 3.4 L12.4 9.5 M12.4 3.4 L2 9.5" stroke="#c83c70" stroke-width="2.8" stroke-linecap="round"/></svg>
<div class="b" style="left:96px;top:178px;width:625px;height:12px;background:#a4caee;"></div>
<div class="b" style="left:721px;top:178px;width:75px;height:12px;background:#a4caee;"></div>
<div class="t" style="left:341.90px;top:179.43px;font-size:8px;line-height:9.6px;color:#111;transform:scaleX(0.9018);transform-origin:0 0;">Scheda contabile di <b>BARISONZI DAVIDE</b></div>
<div class="t" style="left:749.50px;top:179.43px;font-size:8px;line-height:9.6px;color:#111;transform:scaleX(0.9097);transform-origin:0 0;">Totali</div>
<div class="b" style="left:95px;top:190px;width:625px;height:372px;background:#72b6d1;"></div>
<div class="b" style="left:96px;top:190px;width:1px;height:384px;background:#4a5a66;"></div>
<div class="b" style="left:95px;top:562.2px;width:626px;height:12px;background:#f0f0f0;border-top:1px solid #f8fbfc;"></div>
<div class="b" style="left:108px;top:564px;width:10.75px;height:8.5px;background:#cdcdcd;"></div>
<svg class="b" style="left:100px;top:566px" width="4.5" height="5" viewBox="0 0 4.5 5"><path d="M3.8 0.3 L0.8 2.5 L3.8 4.7" fill="none" stroke="#222" stroke-width="1.2"/></svg>
<svg class="b" style="left:713px;top:566px" width="4.5" height="5" viewBox="0 0 4.5 5"><path d="M0.7 0.3 L3.7 2.5 L0.7 4.7" fill="none" stroke="#222" stroke-width="1.2"/></svg>
<div class="b" style="left:96.4px;top:190.6px;width:43px;height:16.6px;background:#000;border:1px solid #707070;"></div>
<div class="t" style="left:17.5px;width:200px;text-align:center;top:195.31px;font-size:7.6px;line-height:9.12px;color:#d7d23a;">5</div>
<div class="b" style="left:138px;top:190px;width:583px;height:18px;background:#5a6870;"></div>
<div class="b" style="left:139px;top:191.5px;width:77px;height:11px;background:#1a9ad8;"></div>
<div class="b" style="left:139px;top:202.5px;width:77px;height:4.5px;background:#fff;"></div>
<div class="b" style="left:142px;top:204.5px;width:69px;height:1px;background:repeating-linear-gradient(to right,#b0b0b0 0 2px,#fff 2px 3px);"></div>
<svg class="b" style="left:141px;top:204.3px" width="4" height="2.5" viewBox="0 0 4 2.5"><path d="M0 0 L4 0 L2 2.5 Z" fill="#111"/></svg>
<svg class="b" style="left:210px;top:204.3px" width="4" height="2.5" viewBox="0 0 4 2.5"><path d="M0 0 L4 0 L2 2.5 Z" fill="#111"/></svg>
<div class="t" style="left:150.60px;top:192.93px;font-size:8px;line-height:9.6px;color:#e8f6ff;transform:scaleX(0.9030);transform-origin:0 0;">Fattura/RT</div>
<svg class="b" style="left:200px;top:193.5px" width="13" height="7.5" viewBox="0 0 13 7.5"><circle cx="4" cy="2.6" r="2" fill="none" stroke="#0a1a30" stroke-width="1.1"/><path d="M2.6 4.2 L0.8 6.8" stroke="#e8f4ff" stroke-width="1.1"/><path d="M6.8 0.8 L12.2 0.8 L9.5 6 Z" fill="none" stroke="#0a1a30" stroke-width="1"/><path d="M12.2 0.8 L9.5 6" stroke="#e8f4ff" stroke-width="1"/></svg>
<div class="b" style="left:218px;top:191.5px;width:67px;height:11px;background:#1a9ad8;"></div>
<div class="b" style="left:218px;top:202.5px;width:67px;height:4.5px;background:#fff;"></div>
<div class="b" style="left:221px;top:204.5px;width:59px;height:1px;background:repeating-linear-gradient(to right,#b0b0b0 0 2px,#fff 2px 3px);"></div>
<svg class="b" style="left:220px;top:204.3px" width="4" height="2.5" viewBox="0 0 4 2.5"><path d="M0 0 L4 0 L2 2.5 Z" fill="#111"/></svg>
<svg class="b" style="left:279px;top:204.3px" width="4" height="2.5" viewBox="0 0 4 2.5"><path d="M0 0 L4 0 L2 2.5 Z" fill="#111"/></svg>
<div class="t" style="left:234.00px;top:192.93px;font-size:8px;line-height:9.6px;color:#e8f6ff;transform:scaleX(0.9109);transform-origin:0 0;">Data</div>
<svg class="b" style="left:269px;top:193.5px" width="13" height="7.5" viewBox="0 0 13 7.5"><circle cx="4" cy="2.6" r="2" fill="none" stroke="#0a1a30" stroke-width="1.1"/><path d="M2.6 4.2 L0.8 6.8" stroke="#e8f4ff" stroke-width="1.1"/><path d="M7.5 2 L11.5 2 M10 0.5 L11.8 2 M12 4.5 L8 4.5 M9.5 6 L7.7 4.5" fill="none" stroke="#e8f4ff" stroke-width="1"/><path d="M7.5 2 L11.5 2" stroke="#0a1a30" stroke-width="0.6"/></svg>
<div class="b" style="left:288px;top:191.5px;width:232px;height:11px;background:#1a9ad8;"></div>
<div class="b" style="left:288px;top:202.5px;width:232px;height:4.5px;background:#fff;"></div>
<div class="b" style="left:291px;top:204.5px;width:224px;height:1px;background:repeating-linear-gradient(to right,#b0b0b0 0 2px,#fff 2px 3px);"></div>
<svg class="b" style="left:290px;top:204.3px" width="4" height="2.5" viewBox="0 0 4 2.5"><path d="M0 0 L4 0 L2 2.5 Z" fill="#111"/></svg>
<svg class="b" style="left:514px;top:204.3px" width="4" height="2.5" viewBox="0 0 4 2.5"><path d="M0 0 L4 0 L2 2.5 Z" fill="#111"/></svg>
<div class="t" style="left:376.00px;top:192.93px;font-size:8px;line-height:9.6px;color:#e8f6ff;transform:scaleX(0.8613);transform-origin:0 0;">Descrizione</div>
<svg class="b" style="left:504px;top:193.5px" width="13" height="7.5" viewBox="0 0 13 7.5"><circle cx="4" cy="2.6" r="2" fill="none" stroke="#0a1a30" stroke-width="1.1"/><path d="M2.6 4.2 L0.8 6.8" stroke="#e8f4ff" stroke-width="1.1"/><path d="M7.5 2 L11.5 2 M10 0.5 L11.8 2 M12 4.5 L8 4.5 M9.5 6 L7.7 4.5" fill="none" stroke="#e8f4ff" stroke-width="1"/><path d="M7.5 2 L11.5 2" stroke="#0a1a30" stroke-width="0.6"/></svg>
<div class="b" style="left:523px;top:191.5px;width:60px;height:11px;background:#1a9ad8;"></div>
<div class="b" style="left:523px;top:202.5px;width:60px;height:4.5px;background:#fff;"></div>
<div class="b" style="left:526px;top:204.5px;width:52px;height:1px;background:repeating-linear-gradient(to right,#b0b0b0 0 2px,#fff 2px 3px);"></div>
<svg class="b" style="left:525px;top:204.3px" width="4" height="2.5" viewBox="0 0 4 2.5"><path d="M0 0 L4 0 L2 2.5 Z" fill="#111"/></svg>
<svg class="b" style="left:577px;top:204.3px" width="4" height="2.5" viewBox="0 0 4 2.5"><path d="M0 0 L4 0 L2 2.5 Z" fill="#111"/></svg>
<div class="t" style="left:525.60px;top:192.93px;font-size:8px;line-height:9.6px;color:#e8f6ff;transform:scaleX(0.8521);transform-origin:0 0;">Prestazione</div>
<svg class="b" style="left:567px;top:193.5px" width="13" height="7.5" viewBox="0 0 13 7.5"><circle cx="4" cy="2.6" r="2" fill="none" stroke="#0a1a30" stroke-width="1.1"/><path d="M2.6 4.2 L0.8 6.8" stroke="#e8f4ff" stroke-width="1.1"/><path d="M7.5 2 L11.5 2 M10 0.5 L11.8 2 M12 4.5 L8 4.5 M9.5 6 L7.7 4.5" fill="none" stroke="#e8f4ff" stroke-width="1"/><path d="M7.5 2 L11.5 2" stroke="#0a1a30" stroke-width="0.6"/></svg>
<div class="b" style="left:585px;top:191.5px;width:50px;height:11px;background:#1a9ad8;"></div>
<div class="b" style="left:585px;top:202.5px;width:50px;height:4.5px;background:#fff;"></div>
<div class="b" style="left:588px;top:204.5px;width:42px;height:1px;background:repeating-linear-gradient(to right,#b0b0b0 0 2px,#fff 2px 3px);"></div>
<svg class="b" style="left:587px;top:204.3px" width="4" height="2.5" viewBox="0 0 4 2.5"><path d="M0 0 L4 0 L2 2.5 Z" fill="#111"/></svg>
<svg class="b" style="left:629px;top:204.3px" width="4" height="2.5" viewBox="0 0 4 2.5"><path d="M0 0 L4 0 L2 2.5 Z" fill="#111"/></svg>
<div class="t" style="left:588.00px;top:192.93px;font-size:8px;line-height:9.6px;color:#e8f6ff;transform:scaleX(0.9065);transform-origin:0 0;">Incasso</div>
<svg class="b" style="left:619px;top:193.5px" width="13" height="7.5" viewBox="0 0 13 7.5"><circle cx="4" cy="2.6" r="2" fill="none" stroke="#0a1a30" stroke-width="1.1"/><path d="M2.6 4.2 L0.8 6.8" stroke="#e8f4ff" stroke-width="1.1"/><path d="M7.5 2 L11.5 2 M10 0.5 L11.8 2 M12 4.5 L8 4.5 M9.5 6 L7.7 4.5" fill="none" stroke="#e8f4ff" stroke-width="1"/><path d="M7.5 2 L11.5 2" stroke="#0a1a30" stroke-width="0.6"/></svg>
<div class="b" style="left:637px;top:191.5px;width:83px;height:11px;background:#1a9ad8;"></div>
<div class="b" style="left:637px;top:202.5px;width:83px;height:4.5px;background:#fff;"></div>
<div class="b" style="left:640px;top:204.5px;width:75px;height:1px;background:repeating-linear-gradient(to right,#b0b0b0 0 2px,#fff 2px 3px);"></div>
<svg class="b" style="left:639px;top:204.3px" width="4" height="2.5" viewBox="0 0 4 2.5"><path d="M0 0 L4 0 L2 2.5 Z" fill="#111"/></svg>
<svg class="b" style="left:714px;top:204.3px" width="4" height="2.5" viewBox="0 0 4 2.5"><path d="M0 0 L4 0 L2 2.5 Z" fill="#111"/></svg>
<div class="t" style="left:639.80px;top:192.93px;font-size:8px;line-height:9.6px;color:#e8f6ff;transform:scaleX(0.8995);transform-origin:0 0;">Rif. pagante/pratica</div>
<svg class="b" style="left:704px;top:193.5px" width="13" height="7.5" viewBox="0 0 13 7.5"><circle cx="4" cy="2.6" r="2" fill="none" stroke="#0a1a30" stroke-width="1.1"/><path d="M2.6 4.2 L0.8 6.8" stroke="#e8f4ff" stroke-width="1.1"/><path d="M7.5 2 L11.5 2 M10 0.5 L11.8 2 M12 4.5 L8 4.5 M9.5 6 L7.7 4.5" fill="none" stroke="#e8f4ff" stroke-width="1"/><path d="M7.5 2 L11.5 2" stroke="#0a1a30" stroke-width="0.6"/></svg>
<div class="b" style="left:96px;top:207px;width:625px;height:64px;background:#5a6870;"></div>
<div class="b" style="left:97px;top:208.20000000000002px;width:41.8px;height:11.360000000000001px;background:#36a4d6;border:1px solid #5a6a74;border-top-color:#cfeefa;border-left-color:#cfeefa;"></div>
<div class="t" style="left:111.75px;top:210.03px;font-size:8px;line-height:9.6px;color:#e8f6ff;transform:scaleX(0.8608);transform-origin:0 0;">467</div>
<div class="b" style="left:139px;top:207.8px;width:79px;height:12.56px;background:#ffffff;"></div>
<div class="b" style="left:218px;top:207.8px;width:69px;height:12.56px;background:#ffffff;"></div>
<div class="b" style="left:288px;top:207.8px;width:234px;height:12.56px;background:#ffffff;"></div>
<div class="b" style="left:523px;top:207.8px;width:62px;height:12.56px;background:#ffffff;"></div>
<div class="b" style="left:585px;top:207.8px;width:52px;height:12.56px;background:#ffffff;"></div>
<div class="b" style="left:637px;top:207.8px;width:84px;height:12.56px;background:#ffffff;"></div>
<div class="t" style="left:140.60px;top:209.00px;font-size:9.4px;line-height:11.28px;color:#000;transform:scaleX(0.8967);transform-origin:0 0;">da fatturare</div>
<div class="t" style="left:218.75px;top:209.00px;font-size:9.4px;line-height:11.28px;color:#000;transform:scaleX(0.8976);transform-origin:0 0;">08/11/2019</div>
<div class="t" style="left:286.80px;top:209.00px;font-size:9.4px;line-height:11.28px;color:#000;transform:scaleX(0.9415);transform-origin:0 0;">VISITA MEDICA PATENTI A-B</div>
<div class="t" style="left:559.40px;top:209.00px;font-size:9.4px;line-height:11.28px;color:#000;transform:scaleX(0.8227);transform-origin:0 0;">50,00€</div>
<div class="b" style="left:97px;top:220.76000000000002px;width:41.8px;height:11.360000000000001px;background:#36a4d6;border:1px solid #5a6a74;border-top-color:#cfeefa;border-left-color:#cfeefa;"></div>
<div class="t" style="left:111.75px;top:222.59px;font-size:8px;line-height:9.6px;color:#e8f6ff;transform:scaleX(0.8608);transform-origin:0 0;">468</div>
<div class="b" style="left:139px;top:220.36px;width:79px;height:12.56px;background:#e6f3fb;"></div>
<div class="b" style="left:218px;top:220.36px;width:69px;height:12.56px;background:#e6f3fb;"></div>
<div class="b" style="left:288px;top:220.36px;width:234px;height:12.56px;background:#e6f3fb;"></div>
<div class="b" style="left:523px;top:220.36px;width:62px;height:12.56px;background:#e6f3fb;"></div>
<div class="b" style="left:585px;top:220.36px;width:52px;height:12.56px;background:#e6f3fb;"></div>
<div class="b" style="left:637px;top:220.36px;width:84px;height:12.56px;background:#e6f3fb;"></div>
<div class="t" style="left:140.60px;top:221.56px;font-size:9.4px;line-height:11.28px;color:#000;transform:scaleX(0.8967);transform-origin:0 0;">da fatturare</div>
<div class="t" style="left:218.75px;top:221.56px;font-size:9.4px;line-height:11.28px;color:#000;transform:scaleX(0.8976);transform-origin:0 0;">08/11/2019</div>
<div class="t" style="left:286.80px;top:221.56px;font-size:9.4px;line-height:11.28px;color:#000;transform:scaleX(0.9072);transform-origin:0 0;">BOLLETTINO POSTALE 9001 - 10,20E</div>
<div class="t" style="left:559.40px;top:221.56px;font-size:9.4px;line-height:11.28px;color:#000;transform:scaleX(0.8227);transform-origin:0 0;">10,20€</div>
<div class="b" style="left:97px;top:233.32000000000002px;width:41.8px;height:11.360000000000001px;background:#36a4d6;border:1px solid #5a6a74;border-top-color:#cfeefa;border-left-color:#cfeefa;"></div>
<div class="t" style="left:111.75px;top:235.15px;font-size:8px;line-height:9.6px;color:#e8f6ff;transform:scaleX(0.8608);transform-origin:0 0;">469</div>
<div class="b" style="left:139px;top:232.92000000000002px;width:79px;height:12.56px;background:#ffffff;"></div>
<div class="b" style="left:218px;top:232.92000000000002px;width:69px;height:12.56px;background:#ffffff;"></div>
<div class="b" style="left:288px;top:232.92000000000002px;width:234px;height:12.56px;background:#ffffff;"></div>
<div class="b" style="left:523px;top:232.92000000000002px;width:62px;height:12.56px;background:#ffffff;"></div>
<div class="b" style="left:585px;top:232.92000000000002px;width:52px;height:12.56px;background:#ffffff;"></div>
<div class="b" style="left:637px;top:232.92000000000002px;width:84px;height:12.56px;background:#ffffff;"></div>
<div class="t" style="left:140.60px;top:234.12px;font-size:9.4px;line-height:11.28px;color:#000;transform:scaleX(0.8967);transform-origin:0 0;">da fatturare</div>
<div class="t" style="left:218.75px;top:234.12px;font-size:9.4px;line-height:11.28px;color:#000;transform:scaleX(0.8976);transform-origin:0 0;">08/11/2019</div>
<div class="t" style="left:286.80px;top:234.12px;font-size:9.4px;line-height:11.28px;color:#000;transform:scaleX(0.9072);transform-origin:0 0;">BOLLETTINO POSTALE 4028 - 16,00E</div>
<div class="t" style="left:559.40px;top:234.12px;font-size:9.4px;line-height:11.28px;color:#000;transform:scaleX(0.8227);transform-origin:0 0;">16,00€</div>
<div class="b" style="left:97px;top:245.88000000000002px;width:41.8px;height:11.360000000000001px;background:#36a4d6;border:1px solid #5a6a74;border-top-color:#cfeefa;border-left-color:#cfeefa;"></div>
<div class="t" style="left:111.75px;top:247.71px;font-size:8px;line-height:9.6px;color:#e8f6ff;transform:scaleX(0.8608);transform-origin:0 0;">470</div>
<div class="b" style="left:139px;top:245.48000000000002px;width:79px;height:12.56px;background:#e6f3fb;"></div>
<div class="b" style="left:218px;top:245.48000000000002px;width:69px;height:12.56px;background:#e6f3fb;"></div>
<div class="b" style="left:288px;top:245.48000000000002px;width:234px;height:12.56px;background:#e6f3fb;"></div>
<div class="b" style="left:523px;top:245.48000000000002px;width:62px;height:12.56px;background:#e6f3fb;"></div>
<div class="b" style="left:585px;top:245.48000000000002px;width:52px;height:12.56px;background:#e6f3fb;"></div>
<div class="b" style="left:637px;top:245.48000000000002px;width:84px;height:12.56px;background:#e6f3fb;"></div>
<div class="t" style="left:140.60px;top:246.68px;font-size:9.4px;line-height:11.28px;color:#000;transform:scaleX(0.8967);transform-origin:0 0;">da fatturare</div>
<div class="t" style="left:218.75px;top:246.68px;font-size:9.4px;line-height:11.28px;color:#000;transform:scaleX(0.8976);transform-origin:0 0;">08/11/2019</div>
<div class="t" style="left:286.80px;top:246.68px;font-size:9.4px;line-height:11.28px;color:#000;transform:scaleX(0.9305);transform-origin:0 0;">CORRISPETTIVO RILASCIO PATENTE B</div>
<div class="t" style="left:553.75px;top:246.68px;font-size:9.4px;line-height:11.28px;color:#000;transform:scaleX(0.8631);transform-origin:0 0;">250,00€</div>
<div class="b" style="left:97px;top:258.44px;width:41.8px;height:11.360000000000001px;background:#36a4d6;border:1px solid #5a6a74;border-top-color:#cfeefa;border-left-color:#cfeefa;"></div>
<div class="t" style="left:111.75px;top:260.27px;font-size:8px;line-height:9.6px;color:#e8f6ff;transform:scaleX(0.8608);transform-origin:0 0;">471</div>
<div class="b" style="left:139px;top:258.04px;width:79px;height:12.56px;background:#ffffff;"></div>
<div class="b" style="left:218px;top:258.04px;width:69px;height:12.56px;background:#ffffff;"></div>
<div class="b" style="left:288px;top:258.04px;width:234px;height:12.56px;background:#ffffff;"></div>
<div class="b" style="left:523px;top:258.04px;width:62px;height:12.56px;background:#ffffff;"></div>
<div class="b" style="left:585px;top:258.04px;width:52px;height:12.56px;background:#ffffff;"></div>
<div class="b" style="left:637px;top:258.04px;width:84px;height:12.56px;background:#ffffff;"></div>
<div class="t" style="left:140.60px;top:259.24px;font-size:9.4px;line-height:11.28px;color:#000;transform:scaleX(0.8967);transform-origin:0 0;">da fatturare</div>
<div class="t" style="left:218.75px;top:259.24px;font-size:9.4px;line-height:11.28px;color:#000;transform:scaleX(0.8976);transform-origin:0 0;">08/11/2019</div>
<div class="t" style="left:286.80px;top:259.24px;font-size:9.4px;line-height:11.28px;color:#000;transform:scaleX(0.9158);transform-origin:0 0;">MARCA DA BOLLO</div>
<div class="t" style="left:559.40px;top:259.24px;font-size:9.4px;line-height:11.28px;color:#000;transform:scaleX(0.8227);transform-origin:0 0;">16,00€</div>
<div class="b" style="left:216.5px;top:207.5px;width:2px;height:63px;background:#555;"></div>
<div class="b" style="left:285.5px;top:207.5px;width:2px;height:63px;background:#555;"></div>
<div class="b" style="left:520.5px;top:207.5px;width:2px;height:63px;background:#555;"></div>
<div class="b" style="left:583.5px;top:207.5px;width:2px;height:63px;background:#555;"></div>
<div class="b" style="left:635.5px;top:207.5px;width:2px;height:63px;background:#555;"></div>
<div class="b" style="left:585px;top:207.5px;width:50px;height:12.1px;background:#000;"></div>
<div class="b" style="left:721px;top:190px;width:75px;height:384.7px;background:linear-gradient(to bottom,#1a7d9c 0%,#1f86a6 30%,#3f9bc4 55%,#77b2dc 78%,#a5cbee 100%);border-left:1px solid #e0eef6;"></div>
<div class="t" style="left:732.00px;top:195.67px;font-size:8.8px;line-height:10.56px;color:#fff;font-weight:bold;transform:scaleX(0.9856);transform-origin:0 0;">Prestazioni €</div>
<div class="b" style="left:727.5px;top:207px;width:61px;height:23px;background:#06301a;"></div>
<div class="b" style="left:726.5px;top:206px;width:61px;height:23px;background:#12e05c;border:1px solid #0b3018;"></div>
<div class="t" style="left:744.50px;top:210.26px;font-size:12.3px;line-height:14.76px;color:#000;font-weight:bold;transform:scaleX(1.0233);transform-origin:0 0;">342,20</div>
<div class="t" style="left:741.40px;top:232.77px;font-size:8.8px;line-height:10.56px;color:#fff;font-weight:bold;transform:scaleX(0.9470);transform-origin:0 0;">Incassi €</div>
<div class="b" style="left:727.5px;top:244.4px;width:61px;height:23px;background:#06301a;"></div>
<div class="b" style="left:726.5px;top:243.4px;width:61px;height:23px;background:#12e05c;border:1px solid #0b3018;"></div>
<div class="t" style="left:759.60px;top:247.66px;font-size:12.3px;line-height:14.76px;color:#000;font-weight:bold;transform:scaleX(0.9775);transform-origin:0 0;">0,00</div>
<div class="t" style="left:743.80px;top:270.17px;font-size:8.8px;line-height:10.56px;color:#fff;font-weight:bold;transform:scaleX(0.9841);transform-origin:0 0;">Saldo €</div>
<div class="b" style="left:727.5px;top:281.4px;width:61px;height:23px;background:#06301a;"></div>
<div class="b" style="left:726.5px;top:280.4px;width:61px;height:23px;background:#12e05c;border:1px solid #0b3018;"></div>
<div class="t" style="left:744.50px;top:284.66px;font-size:12.3px;line-height:14.76px;color:#000;font-weight:bold;transform:scaleX(1.0233);transform-origin:0 0;">342,20</div>
</body></html>
